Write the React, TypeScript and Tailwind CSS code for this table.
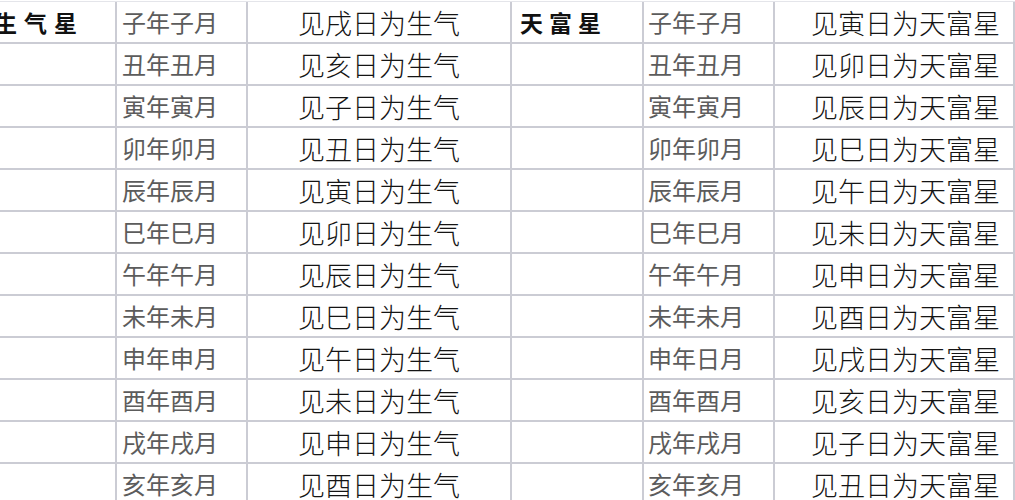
const rows = [
  ["子年子月", "见戌日为生气", "子年子月", "见寅日为天富星"],
  ["丑年丑月", "见亥日为生气", "丑年丑月", "见卯日为天富星"],
  ["寅年寅月", "见子日为生气", "寅年寅月", "见辰日为天富星"],
  ["卯年卯月", "见丑日为生气", "卯年卯月", "见巳日为天富星"],
  ["辰年辰月", "见寅日为生气", "辰年辰月", "见午日为天富星"],
  ["巳年巳月", "见卯日为生气", "巳年巳月", "见未日为天富星"],
  ["午年午月", "见辰日为生气", "午年午月", "见申日为天富星"],
  ["未年未月", "见巳日为生气", "未年未月", "见酉日为天富星"],
  ["申年申月", "见午日为生气", "申年日月", "见戌日为天富星"],
  ["酉年酉月", "见未日为生气", "酉年酉月", "见亥日为天富星"],
  ["戌年戌月", "见申日为生气", "戌年戌月", "见子日为天富星"],
  ["亥年亥月", "见酉日为生气", "亥年亥月", "见丑日为天富星"],
];

const cell = "flex items-center border-r-2 border-b-2 border-[#cbccd4] overflow-hidden whitespace-nowrap";
const month = "text-[24px] text-[#5c5c5c] leading-none";
const rule = "text-[27px] text-[#141414] leading-none font-light";
const head = "text-[23px] font-bold text-[#111] leading-none";

export default function App() {
  return (
    <div
      className="w-[1015px] h-[500px] overflow-hidden bg-white pt-px"
      style={{ fontFamily: '"Noto Sans CJK SC", "Noto Sans", sans-serif' }}
    >
      <div className="grid grid-cols-[117px_131px_264px_132px_131px_1fr] auto-rows-[42px] border-t border-[#e4e5ea]">
        {rows.map((r, i) => (
          <div key={i} className="contents">
            <div className={cell}>
              {i === 0 && <span className={`${head} -ml-[6px] tracking-[7px]`}>生气星</span>}
            </div>
            <div className={`${cell} pl-[5px]`}>
              <span className={month}>{r[0]}</span>
            </div>
            <div className={`${cell} justify-center`}>
              <span className={rule}>{r[1]}</span>
            </div>
            <div className={`${cell} pl-[8px]`}>
              {i === 0 && <span className={`${head} tracking-[6px]`}>天富星</span>}
            </div>
            <div className={`${cell} pl-[4px]`}>
              <span className={month}>{r[2]}</span>
            </div>
            <div className={`${cell} pl-[36px] border-r-0`}>
              <span className={rule}>{r[3]}</span>
            </div>
          </div>
        ))}
      </div>
    </div>
  );
}
